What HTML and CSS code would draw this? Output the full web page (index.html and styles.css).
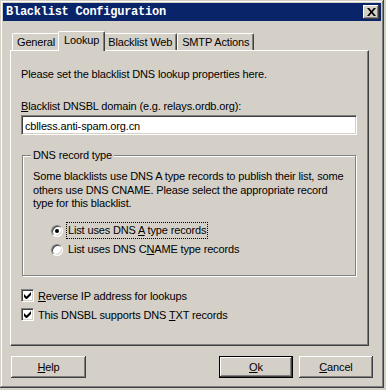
FILE: index.html
```html
<!DOCTYPE html>
<html lang="en">
<head>
  <meta charset="UTF-8">
  <meta name="viewport" content="width=device-width, initial-scale=1.0">
  <title>Blacklist Configuration</title>
  <link rel="stylesheet" href="styles.css">
</head>
<body>
  <div class="window">
    <!-- Title bar -->
    <div class="titlebar">
      <span class="title">Blacklist Configuration</span>
      <span class="close">
        <svg width="9" height="8" viewBox="0 0 9 8">
          <path d="M0 0h2.2l2.3 2.8 2.3-2.8h2.2l-3.4 4 3.4 4h-2.2l-2.3-2.8-2.3 2.8h-2.2l3.4-4z" fill="#000"/>
        </svg>
      </span>
    </div>

    <div class="content">
      <!-- Tabs -->
      <div class="tabs">
        <div class="tab">General</div>
        <div class="tab active">Lookup</div>
        <div class="tab">Blacklist Web</div>
        <div class="tab">SMTP Actions</div>
      </div>

      <div class="panel">
        <p class="intro">Please set the blacklist DNS lookup properties here.</p>

        <label class="field-label"><u>B</u>lacklist DNSBL domain (e.g. relays.ordb.org):</label>
        <div class="textbox">cblless.anti-spam.org.cn</div>

        <div class="group">
          <span class="legend">DNS record type</span>
          <p class="group-text">Some blacklists use DNS A type records to publish their list, some others use DNS CNAME. Please select the appropriate record type for this blacklist.</p>
          <div class="radios">
            <div class="radio-row">
              <span class="radio checked"></span>
              <span class="focus">List uses DNS <u>A</u> type records</span>
            </div>
            <div class="radio-row">
              <span class="radio"></span>
              <span class="plain">List uses DNS C<u>N</u>AME type records</span>
            </div>
          </div>
        </div>

        <div class="checks">
          <div class="check-row">
            <span class="checkbox">
              <svg width="7" height="7" viewBox="0 0 7 7"><path d="M0 2v3l2 2h1l4-4V0L2.5 4.5z" fill="#000"/></svg>
            </span>
            <span><u>R</u>everse IP address for lookups</span>
          </div>
          <div class="check-row">
            <span class="checkbox">
              <svg width="7" height="7" viewBox="0 0 7 7"><path d="M0 2v3l2 2h1l4-4V0L2.5 4.5z" fill="#000"/></svg>
            </span>
            <span>This DNSBL supports DNS <u>T</u>XT records</span>
          </div>
        </div>
      </div>

      <!-- Buttons -->
      <div class="buttons">
        <button class="btn help"><u>H</u>elp</button>
        <div class="right">
          <button class="btn ok"><u>O</u>k</button>
          <button class="btn"><u>C</u>ancel</button>
        </div>
      </div>
    </div>
  </div>
</body>
</html>
```

FILE: styles.css
```css
body {
  margin: 0;
  background: #d4d0c8;
  font-family: Tahoma, 'Liberation Sans', sans-serif;
  font-size: 11px;
  letter-spacing: -0.15px;
  color: #000;
}
u {
  text-decoration: underline;
  text-underline-offset: 1px;
}
.window {
  width: 384px;
  height: 388px;
  box-sizing: border-box;
  padding: 3px;
  background: #d4d0c8;
  box-shadow: inset -1px -1px #404040, inset 1px 1px #d4d0c8, inset -2px -2px #808080, inset 2px 2px #fff;
}
.titlebar {
  height: 18px;
  background: #0a246a;
  display: flex;
  align-items: center;
  justify-content: space-between;
  padding: 0 2px 0 3px;
}
.title {
  font-family: 'Liberation Mono', monospace;
  font-weight: bold;
  font-size: 12px;
  letter-spacing: -0.25px;
  color: #fff;
}
.close {
  width: 16px;
  height: 14px;
  box-sizing: border-box;
  background: #d4d0c8;
  display: flex;
  align-items: center;
  justify-content: center;
  box-shadow: inset -1px -1px #404040, inset 1px 1px #fff, inset -2px -2px #808080;
}
.content {
  padding: 10px 7px 0 7px;
}

/* tabs */
.tabs {
  display: flex;
  align-items: flex-end;
  padding-left: 2px;
  height: 19px;
  position: relative;
  z-index: 1;
}
.tab {
  height: 17px;
  line-height: 16px;
  padding: 0 4px;
  box-sizing: border-box;
  border-top: 1px solid #fff;
  border-left: 1px solid #fff;
  border-right: 1px solid #404040;
  border-radius: 2px 2px 0 0;
  box-shadow: inset -1px 0 #808080;
}
.tab.active {
  height: 20px;
  margin: 0 -2px -1px;
  padding: 1px 5px 0;
  line-height: 15px;
  background: #d4d0c8;
  z-index: 2;
}
.panel {
  height: 296px;
  box-sizing: border-box;
  margin-right: 5px;
  border-top: 1px solid #fff;
  border-left: 1px solid #fff;
  border-right: 1px solid #404040;
  border-bottom: 1px solid #404040;
  box-shadow: inset -1px -1px #808080;
  padding: 16px 11px 0 10px;
}
.intro {
  margin: 0 0 18px;
  line-height: 14px;
}
.field-label {
  display: block;
  line-height: 14px;
  margin-bottom: 2px;
}
.textbox {
  height: 20px;
  box-sizing: border-box;
  background: #fff;
  border-top: 1px solid #808080;
  border-left: 1px solid #808080;
  border-right: 1px solid #fff;
  border-bottom: 1px solid #fff;
  box-shadow: inset 1px 1px #404040, inset -1px -1px #d4d0c8;
  padding: 3px 3px 0;
  line-height: 14px;
}
.group {
  position: relative;
  margin: 20px 1px 0;
  height: 121px;
  box-sizing: border-box;
  border: 1px solid #808080;
  box-shadow: inset 1px 1px #fff, 1px 1px #fff;
  padding: 14px 6px 0 10px;
}
.legend {
  position: absolute;
  top: -7px;
  left: 8px;
  padding: 0 2px;
  background: #d4d0c8;
  line-height: 13px;
}
.group-text {
  margin: 0;
  line-height: 13.5px;
}
.radios {
  margin-top: 13px;
  padding-left: 18px;
  display: flex;
  flex-direction: column;
  gap: 5px;
}
.radio-row {
  display: flex;
  align-items: center;
  gap: 4px;
  height: 14px;
}
.radio {
  width: 12px;
  height: 12px;
  border-radius: 50%;
  box-sizing: border-box;
  background: #fff;
  border: 1px solid;
  border-color: #808080 #fff #fff #808080;
  box-shadow: inset 1px 1px #404040, inset -1px -1px #d4d0c8;
  display: flex;
  align-items: center;
  justify-content: center;
}
.radio.checked::after {
  content: '';
  width: 4px;
  height: 4px;
  border-radius: 50%;
  background: #000;
}
.focus {
  outline: 1px dotted #000;
  padding: 1px 1px 2px;
}
.plain {
  padding: 1px 1px 2px;
}
.checks {
  margin-top: 13px;
  display: flex;
  flex-direction: column;
  gap: 6px;
}
.check-row {
  display: flex;
  align-items: center;
  gap: 4px;
  height: 13px;
}
.checkbox {
  width: 13px;
  height: 13px;
  box-sizing: border-box;
  background: #fff;
  border-top: 1px solid #808080;
  border-left: 1px solid #808080;
  border-right: 1px solid #fff;
  border-bottom: 1px solid #fff;
  box-shadow: inset 1px 1px #404040, inset -1px -1px #d4d0c8;
  display: flex;
  align-items: center;
  justify-content: center;
}

/* buttons */
.buttons {
  display: flex;
  justify-content: space-between;
  margin-top: 10px;
  padding-left: 1px;
  padding-right: 1px;
}
.right {
  display: flex;
  gap: 6px;
}
.btn {
  width: 74px;
  height: 22px;
  font-family: inherit;
  font-size: 11px;
  letter-spacing: inherit;
  color: #000;
  background: #d4d0c8;
  border: none;
  border-radius: 0;
  padding: 0;
  box-shadow: inset -1px -1px #404040, inset 1px 1px #fff, inset -2px -2px #808080;
}
.btn.help {
  width: 75px;
}
.btn.ok {
  box-shadow: inset 0 0 0 1px #000, inset -2px -2px #404040, inset 2px 2px #fff, inset -3px -3px #808080;
}
```
